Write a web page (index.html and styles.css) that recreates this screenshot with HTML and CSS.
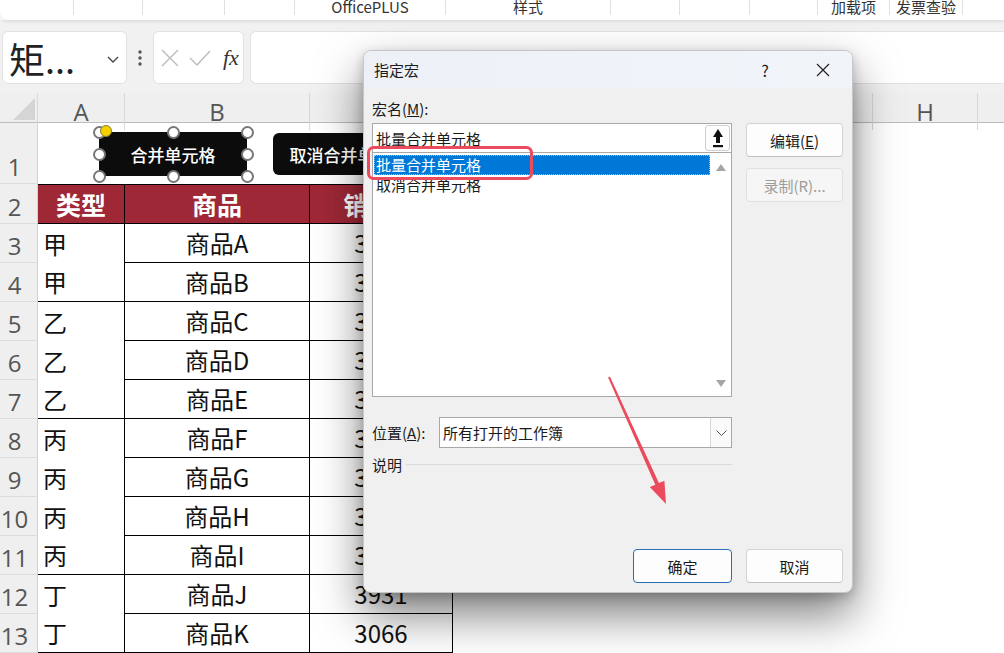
FILE: index.html
```html
<!DOCTYPE html>
<html lang="zh-CN">
<head>
    <meta charset="UTF-8">
    <title>指定宏</title>
    <link rel="stylesheet" href="styles.css">
</head>
<body>
    <div class="ribbon">
        <div class="tab"></div>
        <div class="tab"></div>
        <div class="tab"></div>
        <div class="tab"></div>
        <div class="tab">OfficePLUS</div>
        <div class="tab">样式</div>
        <div class="tab"></div>
        <div class="tab"></div>
        <div class="tab"></div>
        <div class="tab">加载项</div>
        <div class="tab">发票查验</div>
        <div class="tab last"></div>
    </div>

    <div class="formula-bar">
        <div class="name-box">
            <span class="name-text">矩...</span>
            <svg class="chev" width="12" height="7" viewBox="0 0 12 7"><polyline points="1,1 6,6 11,1" fill="none" stroke="#444" stroke-width="1.3"/></svg>
        </div>
        <svg class="fb-dots" width="26" height="53" viewBox="0 0 26 53">
            <circle cx="13" cy="21" r="1.7" fill="#555"/>
            <circle cx="13" cy="27" r="1.7" fill="#555"/>
            <circle cx="13" cy="33" r="1.7" fill="#555"/>
        </svg>
        <div class="fx-box">
            <svg width="18" height="18" viewBox="0 0 18 18"><path d="M1 1 L17 17 M17 1 L1 17" stroke="#bbb" stroke-width="1.4"/></svg>
            <svg width="22" height="16" viewBox="0 0 22 16"><polyline points="1,8 8,15 21,1" fill="none" stroke="#bbb" stroke-width="1.4"/></svg>
            <span class="fx">fx</span>
        </div>
        <div class="formula-input"></div>
    </div>

    <div class="col-head">
        <div class="corner">
            <svg width="38" height="30" viewBox="0 0 38 30"><polygon points="35,5 35,27 13,27" fill="#d5d5d5"/></svg>
        </div>
        <div>A</div><div>B</div><div>C</div><div>D</div><div>E</div><div>F</div><div>G</div><div>H</div><div>I</div><div class="last"></div>
    </div>

    <div class="sheet">
        <div class="row r1"><div class="rh">1</div></div>
        <div class="row r2">
            <div class="rh">2</div>
            <div class="c th">类型</div>
            <div class="c th">商品</div>
            <div class="c th">销售额</div>
        </div>
        <div class="row"><div class="rh">3</div><div class="c ca">甲</div><div class="c cb">商品A</div><div class="c cc">3542</div></div>
        <div class="row"><div class="rh">4</div><div class="c ca end">甲</div><div class="c cb">商品B</div><div class="c cc">3187</div></div>
        <div class="row"><div class="rh">5</div><div class="c ca">乙</div><div class="c cb">商品C</div><div class="c cc">3765</div></div>
        <div class="row"><div class="rh">6</div><div class="c ca">乙</div><div class="c cb">商品D</div><div class="c cc">3320</div></div>
        <div class="row"><div class="rh">7</div><div class="c ca end">乙</div><div class="c cb">商品E</div><div class="c cc">3458</div></div>
        <div class="row"><div class="rh">8</div><div class="c ca">丙</div><div class="c cb">商品F</div><div class="c cc">3612</div></div>
        <div class="row"><div class="rh">9</div><div class="c ca">丙</div><div class="c cb">商品G</div><div class="c cc">3279</div></div>
        <div class="row"><div class="rh">10</div><div class="c ca">丙</div><div class="c cb">商品H</div><div class="c cc">3845</div></div>
        <div class="row"><div class="rh">11</div><div class="c ca end">丙</div><div class="c cb">商品I</div><div class="c cc">3104</div></div>
        <div class="row"><div class="rh">12</div><div class="c ca">丁</div><div class="c cb">商品J</div><div class="c cc">3931</div></div>
        <div class="row"><div class="rh">13</div><div class="c ca end">丁</div><div class="c cb">商品K</div><div class="c cc">3066</div></div>

        <!-- macro buttons drawn on the sheet -->
        <div class="shape merge">合并单元格
            <span class="hd tl"></span><span class="hd tc"></span><span class="hd tr"></span>
            <span class="hd ml"></span><span class="hd mr"></span>
            <span class="hd bl"></span><span class="hd bc"></span><span class="hd br"></span>
            <span class="hd rot"></span>
        </div>
        <div class="shape unmerge">取消合并单元格</div>
    </div>

    <div class="dialog">
        <div class="dlg-title">
            <span class="dlg-name">指定宏</span>
            <span class="help">?</span>
            <span class="close">
                <svg width="14" height="14" viewBox="0 0 14 14"><path d="M1 1 L13 13 M13 1 L1 13" stroke="#222" stroke-width="1.2"/></svg>
            </span>
        </div>
        <div class="dlg-body">
            <div class="lbl">宏名(<u>M</u>):</div>
            <div class="dlg-main">
                <div class="macro-col">
                    <div class="macro-input">
                        <span>批量合并单元格</span>
                        <div class="ref-btn">
                            <svg width="10" height="19" viewBox="0 0 10 19">
                                <polygon points="5,0 10,8 7,8 7,14 3,14 3,8 0,8" fill="#111"/>
                                <rect x="0" y="16" width="10" height="2.2" fill="#111"/>
                            </svg>
                        </div>
                    </div>
                    <div class="macro-list">
                        <div class="items">
                            <div class="item selected">批量合并单元格</div>
                            <div class="item">取消合并单元格</div>
                        </div>
                        <div class="scroll">
                            <svg width="10" height="7" viewBox="0 0 10 7"><polygon points="5,0 10,7 0,7" fill="#a6a6a6"/></svg>
                            <svg width="10" height="7" viewBox="0 0 10 7"><polygon points="0,0 10,0 5,7" fill="#a6a6a6"/></svg>
                        </div>
                    </div>
                </div>
                <div class="side-btns">
                    <button class="btn">编辑(<u>E</u>)</button>
                    <button class="btn disabled">录制(R)...</button>
                </div>
            </div>
            <div class="loc-row">
                <span class="loc-lbl">位置(<u>A</u>):</span>
                <div class="select">
                    <span>所有打开的工作簿</span>
                    <div class="select-arrow">
                        <svg width="11" height="6" viewBox="0 0 11 6"><polyline points="0.5,0.5 5.5,5.5 10.5,0.5" fill="none" stroke="#555" stroke-width="1"/></svg>
                    </div>
                </div>
            </div>
            <div class="desc-row"><span>说明</span><div class="rule"></div></div>
            <div class="dlg-footer">
                <button class="btn primary">确定</button>
                <button class="btn">取消</button>
            </div>
        </div>
    </div>

    <!-- annotation marks -->
    <svg class="marks" width="1004" height="653" viewBox="0 0 1004 653">
        <rect x="368.5" y="147.5" width="163" height="31" rx="5" fill="none" stroke="#ec4b5d" stroke-width="3"/>
        <polygon points="609.9,376.6 658.9,483.1 664.4,480.7 666,504 649.8,487.1 655.3,484.7 608.1,377.4" fill="#ec4b5d"/>
    </svg>
</body>
</html>
```

FILE: styles.css
```css
* {
    margin: 0;
    padding: 0;
    box-sizing: border-box;
}

body {
    width: 1004px;
    height: 653px;
    overflow: hidden;
    position: relative;
    background-color: #fff;
    font-family: "Noto Sans CJK SC", sans-serif;
    color: #1a1a1a;
}

/* ribbon strip */
.ribbon {
    height: 20px;
    display: grid;
    grid-template-columns: 74px 69px 82px 70px 151px 165px 69px 70px 68px 72px 73px 1fr;
    background-color: #fff;
    border-bottom-left-radius: 8px;
    box-shadow: 0 1px 4px rgba(0, 0, 0, 0.12);
    position: relative;
    z-index: 1;
    overflow: hidden;
}

.tab {
    height: 15px;
    border-right: 1px solid #e0e0e0;
    font-size: 15px;
    line-height: 14px;
    text-align: center;
    color: #333;
    overflow: hidden;
}

.tab.last {
    border-right: none;
}

/* formula bar */
.formula-bar {
    height: 73px;
    display: flex;
    align-items: flex-start;
    padding: 11px 0 0 2px;
    background-color: #f1f1f1;
}

.name-box {
    width: 125px;
    height: 53px;
    display: flex;
    align-items: center;
    justify-content: space-between;
    padding: 0 7px 0 6px;
    background-color: #fff;
    border: 1px solid #e2e2e2;
    border-radius: 6px;
}

.name-text {
    font-size: 36px;
    line-height: 1;
    color: #222;
}

.chev {
    margin-top: 4px;
}

.fx-box {
    width: 91px;
    height: 53px;
    display: flex;
    align-items: center;
    padding-left: 7px;
    gap: 10px;
    background-color: #fff;
    border: 1px solid #e2e2e2;
    border-radius: 6px;
}

.fx {
    font-family: "Liberation Serif", serif;
    font-style: italic;
    font-size: 22px;
    color: #333;
    margin-left: 2px;
}

.formula-input {
    flex: 1;
    height: 53px;
    margin-left: 6px;
    background-color: #fff;
    border: 1px solid #e2e2e2;
    border-right: none;
    border-radius: 6px 0 0 6px;
}

/* column headers */
.col-head {
    height: 30px;
    display: grid;
    grid-template-columns: 38px 87px 185px 143px repeat(6, 105px) 1fr;
    background-color: #efefef;
    border-bottom: 1px solid #bcbcbc;
}

.col-head div {
    display: flex;
    align-items: center;
    justify-content: center;
    border-right: 1px solid #d8d8d8;
    font-family: "Open Sans", sans-serif;
    font-size: 24px;
    color: #555;
}

.col-head .corner {
    display: block;
}

.col-head .last {
    border-right: none;
}

/* sheet */
.sheet {
    position: relative;
}

.row {
    height: 39px;
    display: grid;
    grid-template-columns: 38px 87px 185px 143px;
}

.row.r1 {
    height: 61px;
}

.row.r2 {
    height: 40px;
}

.rh {
    display: flex;
    align-items: flex-end;
    justify-content: center;
    padding-right: 8px;
    background-color: #efefef;
    border-right: 1px solid #d2d2d2;
    border-bottom: 1px solid #dcdcdc;
    font-family: "Open Sans", sans-serif;
    font-size: 24px;
    line-height: 32px;
    color: #555;
}

.c {
    display: flex;
    align-items: flex-end;
    padding-bottom: 4px;
    font-size: 24px;
    line-height: 31px;
    color: #111;
}

.c.th {
    align-items: center;
    justify-content: center;
    padding-bottom: 0;
    background-color: #9f2836;
    color: #fff;
    font-weight: bold;
    font-size: 25px;
    border-top: 1px solid #000;
    border-right: 1px solid #000;
    border-bottom: 1px solid #000;
}

.ca {
    padding-left: 5px;
    border-right: 1px solid #000;
}

.ca.end {
    border-bottom: 1px solid #000;
}

.cb,
.cc {
    justify-content: center;
    border-right: 1px solid #000;
    border-bottom: 1px solid #000;
}

/* shapes in row 1 */
.shape {
    position: absolute;
    width: 148px;
    height: 44px;
    display: flex;
    align-items: center;
    justify-content: center;
    background-color: #0c0c0c;
    color: #fff;
    font-size: 17px;
    font-weight: 500;
    border-radius: 6px;
}

.shape.merge {
    left: 99px;
    top: 9px;
}

.shape.unmerge {
    left: 273px;
    top: 10px;
    height: 42px;
    padding-left: 4px;
}

.hd {
    position: absolute;
    width: 13px;
    height: 13px;
    margin: -6.5px 0 0 -6.5px;
    background-color: #fff;
    border: 2px solid #777;
    border-radius: 50%;
}

.hd.tl { left: 0; top: 0; }
.hd.tc { left: 50%; top: 0; }
.hd.tr { left: 100%; top: 0; }
.hd.ml { left: 0; top: 50%; }
.hd.mr { left: 100%; top: 50%; }
.hd.bl { left: 0; top: 100%; }
.hd.bc { left: 50%; top: 100%; }
.hd.br { left: 100%; top: 100%; }

.hd.rot {
    left: 7px;
    top: -1px;
    width: 12px;
    height: 12px;
    background-color: #f3d000;
    border: 1.5px solid #8a7a2a;
}

/* dialog */
.dialog {
    position: absolute;
    left: 363px;
    top: 50px;
    width: 490px;
    height: 543px;
    display: flex;
    flex-direction: column;
    background-color: #f0f0f0;
    border: 1px solid #c6c6c6;
    border-radius: 8px;
    box-shadow: 0 22px 46px rgba(0, 0, 0, 0.5), 0 4px 12px rgba(0, 0, 0, 0.2);
    overflow: hidden;
    z-index: 5;
    font-size: 15px;
    color: #1b1b1b;
}

.dlg-title {
    height: 37px;
    display: flex;
    align-items: center;
    padding: 0 6px 0 10px;
    background: linear-gradient(90deg, #edf1f7, #f1f5fa);
}

.dlg-name {
    flex: 1;
}

.help,
.close {
    width: 46px;
    display: flex;
    justify-content: center;
    font-size: 16px;
}

.help {
    margin-right: 12px;
}

.dlg-body {
    flex: 1;
    display: flex;
    flex-direction: column;
    padding: 11px 9px 9px 8px;
}

.lbl {
    line-height: 20px;
    margin-bottom: 4px;
}

.dlg-main {
    display: flex;
    gap: 14px;
}

.macro-col {
    width: 360px;
}

.macro-input {
    height: 30px;
    display: flex;
    align-items: center;
    justify-content: space-between;
    padding-left: 3px;
    background-color: #fff;
    border: 1px solid #a8a8a8;
}

.ref-btn {
    width: 25px;
    height: 26px;
    margin-right: 1px;
    display: flex;
    align-items: center;
    justify-content: center;
    background-color: #fdfdfd;
    border: 1px solid #d0d0d0;
    border-radius: 3px;
}

.macro-list {
    height: 245px;
    margin-top: -1px;
    display: flex;
    background-color: #fff;
    border: 1px solid #a8a8a8;
}

.items {
    flex: 1;
    padding: 2px 0 0 1px;
}

.item {
    height: 20px;
    line-height: 20px;
    padding-left: 2px;
}

.item.selected {
    background-color: #0078d7;
    color: #fff;
    outline: 1px dotted #8fc1ea;
    outline-offset: -1px;
}

.scroll {
    width: 21px;
    display: flex;
    flex-direction: column;
    justify-content: space-between;
    align-items: center;
    padding: 11px 0 9px;
}

.side-btns {
    display: flex;
    flex-direction: column;
    gap: 11px;
}

.btn {
    width: 97px;
    height: 34px;
    background-color: #fdfdfd;
    border: 1px solid #d4d4d4;
    border-bottom-color: #c2c2c2;
    border-radius: 4px;
    font-family: inherit;
    font-size: 15px;
    color: #1b1b1b;
}

.btn.disabled {
    color: #9c9c9c;
    background-color: #f6f6f6;
    border-color: #e0e0e0;
}

.btn.primary {
    width: 99px;
    border: 1px solid #2a6db3;
}

.loc-row {
    display: flex;
    align-items: center;
    margin-top: 20px;
}

.loc-lbl {
    width: 67px;
}

.select {
    width: 293px;
    height: 31px;
    display: flex;
    align-items: center;
    justify-content: space-between;
    padding-left: 3px;
    background-color: #fff;
    border: 1px solid #a8a8a8;
}

.select-arrow {
    width: 21px;
    height: 29px;
    display: flex;
    align-items: center;
    justify-content: center;
    background-color: #fafafa;
    border-left: 1px solid #d6d6d6;
}

.desc-row {
    width: 360px;
    height: 20px;
    display: flex;
    align-items: center;
    margin-top: 6px;
}

.rule {
    flex: 1;
    margin-left: 4px;
    border-top: 1px solid #dadada;
}

.dlg-footer {
    margin-top: auto;
    display: flex;
    justify-content: flex-end;
    gap: 14px;
}

/* annotations */
.marks {
    position: absolute;
    left: 0;
    top: 0;
    z-index: 10;
    pointer-events: none;
}
```
